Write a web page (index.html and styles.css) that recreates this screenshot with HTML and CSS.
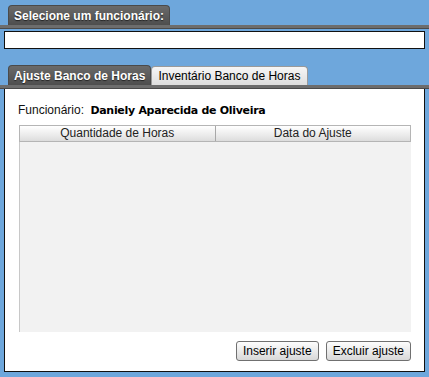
FILE: index.html
```html
<!DOCTYPE html>
<html lang="pt">

<head>
    <meta charset="UTF-8">
    <title>Banco de Horas</title>
    <link rel="stylesheet" href="styles.css">
</head>

<body>
    <!-- Selecao de funcionario -->
    <div class="section">
        <div class="tabs">
            <div class="tab active">Selecione um funcionário:</div>
        </div>
        <div class="tab-line"></div>
        <div class="employee-box"></div>
    </div>

    <!-- Abas do banco de horas -->
    <div class="section second">
        <div class="tabs">
            <div class="tab active">Ajuste Banco de Horas</div>
            <div class="tab">Inventário Banco de Horas</div>
        </div>
        <div class="tab-line"></div>
        <div class="panel">
            <div class="employee-row">
                <span class="label">Funcionário:</span>
                <span class="name">Daniely Aparecida de Oliveira</span>
            </div>
            <div class="grid">
                <div class="grid-header">
                    <div class="col">Quantidade de Horas</div>
                    <div class="col">Data do Ajuste</div>
                </div>
                <div class="grid-body"></div>
            </div>
            <div class="actions">
                <button class="btn">Inserir ajuste</button>
                <button class="btn">Excluir ajuste</button>
            </div>
        </div>
    </div>
</body>

</html>
```

FILE: styles.css
```css
* {
    box-sizing: border-box;
}

body {
    margin: 0;
    padding: 0;
    background-color: #6ea7dc;
    font-family: 'Liberation Sans', Arial, sans-serif;
    font-size: 12px;
    color: #000;
}

.section {
    padding: 5px 4px 0 4px;
}

.section.second {
    padding-top: 16px;
}

/* Tabs */
.tabs {
    display: flex;
    padding-left: 4px;
    height: 20px;
    align-items: flex-end;
}

.tab {
    height: 19px;
    line-height: 18px;
    padding: 0 7px 0 6px;
    background: linear-gradient(#f6f6f6, #dedede);
    border: 1px solid #9a9a9a;
    border-bottom: none;
    border-radius: 4px 4px 0 0;
    color: #000;
    white-space: nowrap;
}

.tab.active {
    height: 20px;
    line-height: 20px;
    padding: 0 5px;
    background: linear-gradient(#6a6a6a, #4e4e4e);
    border-color: #4a4a4a;
    color: #fff;
    font-weight: bold;
    text-shadow: 0 1px 1px #222;
}

.tab-line {
    height: 4px;
    margin: 0 -4px;
    background-color: #6d6d6d;
    border-bottom: 1px solid #4a4a4a;
}

.employee-box {
    margin-top: 2px;
    height: 18px;
    background-color: #fff;
    border: 1px solid #111;
}

/* Painel */
.panel {
    height: 283px;
    background-color: #fff;
    border: 1px solid #111;
    border-top: none;
    padding: 14px 13px 0 13px;
    display: flex;
    flex-direction: column;
}

.employee-row {
    height: 16px;
}

.label {
    color: #111;
    margin-right: 3px;
}

.name {
    font-family: 'DejaVu Sans', sans-serif;
    font-weight: bold;
    font-size: 11px;
    letter-spacing: -0.3px;
}

.grid {
    margin-top: 6px;
    margin-left: 1px;
    display: flex;
    flex-direction: column;
}

.grid-header {
    display: flex;
    height: 17px;
    border: 1px solid #b5b5b5;
    background: linear-gradient(#ffffff, #ebebeb 60%, #dcdcdc);
}

.col {
    flex: 1;
    text-align: center;
    line-height: 15px;
    color: #222;
}

.col + .col {
    border-left: 1px solid #a8a8a8;
}

.grid-body {
    height: 190px;
    background-color: #f2f2f2;
    border-left: 1px solid #c8c8c8;
}

.actions {
    display: flex;
    justify-content: flex-end;
    gap: 7px;
    margin-top: 9px;
}

.btn {
    font-family: 'Liberation Sans', Arial, sans-serif;
    font-size: 12px;
    height: 20px;
    padding: 0 6px;
    background: linear-gradient(#fdfdfd, #e9e9e9 55%, #d8d8d8);
    border: 1px solid #707070;
    border-radius: 3px;
    color: #000;
}
```
